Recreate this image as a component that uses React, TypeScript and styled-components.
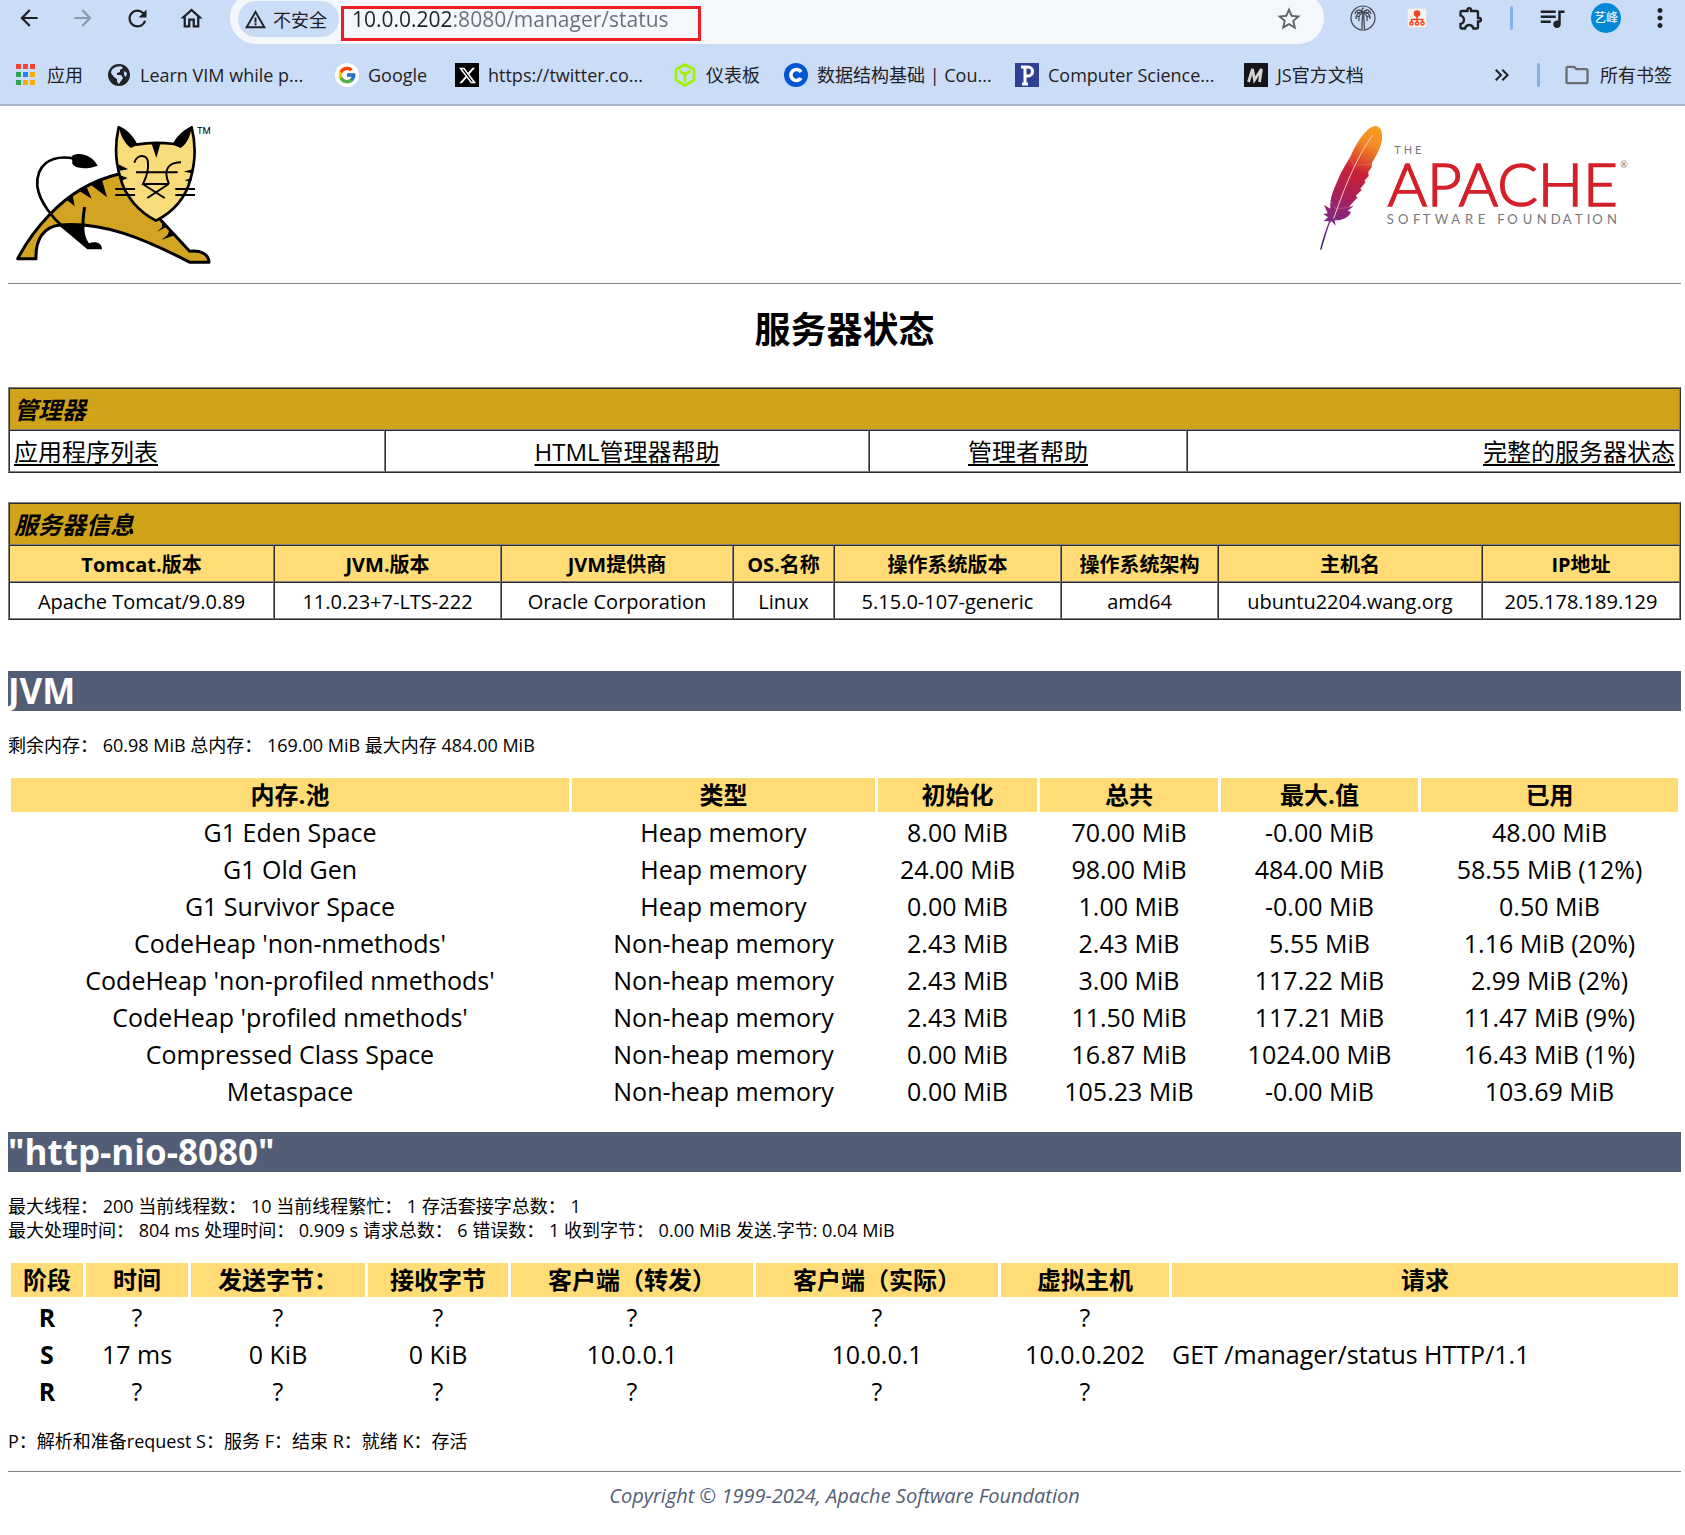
import React from 'react';
import styled, { createGlobalStyle } from 'styled-components';
import {
  MdArrowBack,
  MdArrowForward,
  MdRefresh,
  MdOutlineHome,
  MdStarOutline,
  MdOutlineExtension,
  MdQueueMusic,
  MdMoreVert,
  MdOutlineFolder,
  MdKeyboardDoubleArrowRight,
  MdWarningAmber,
} from 'react-icons/md';
import { FcGoogle } from 'react-icons/fc';
import { FaXTwitter } from 'react-icons/fa6';

const GlobalStyle = createGlobalStyle`
  *, *::before, *::after { box-sizing: border-box; }
  body {
    margin: 0;
    background: #fff;
    color: #000;
    font-family: "Open Sans", "Noto Sans CJK SC", sans-serif;
    overflow-x: hidden;
  }
  button { font: inherit; border: 0; padding: 0; background: none; color: inherit; }
`;

/* ---------- browser bar ---------- */

const BrowserBar = styled.header`
  background: #cbdcf6;
  border-bottom: 2px solid #a6b5cc;
  overflow: hidden;
`;

const Toolbar = styled.div`
  display: flex;
  height: 44px;
  margin-right: -2px;
  padding-left: 2px;
`;

const ToolGroup = styled.div`
  display: flex;
  flex: none;
  align-items: center;
  height: 36px;
`;

const ToolButton = styled.button<{ $muted?: boolean }>`
  display: flex;
  align-items: center;
  justify-content: center;
  width: 54px;
  height: 36px;
  color: ${(p) => (p.$muted ? '#8b97ab' : '#1f2125')};
`;

const Omnibox = styled.div`
  flex: 1;
  min-width: 0;
  display: flex;
  align-items: center;
  height: 52px;
  margin: -8px 12px 0;
  padding: 2px 21px 0 8px;
  border-radius: 26px;
  background: #f4f7fc;
`;

const SiteChip = styled.button`
  display: flex;
  align-items: center;
  gap: 6px;
  flex: none;
  width: 101px;
  height: 36px;
  margin-right: 2px;
  padding-left: 6px;
  border-radius: 18px;
  background: #cbdcf6;
  color: #1f2125;
  font-size: 18px;
  white-space: nowrap;
`;

const UrlFrame = styled.label`
  display: flex;
  width: 360px;
  height: 35px;
  margin-top: 8px;
  border: 3px solid #ee1c25;
`;

const UrlInput = styled.input`
  width: 100%;
  height: 28px;
  margin-top: -4px;
  padding: 0 8px;
  border: 0;
  outline: 0;
  font: 21px/28px "Open Sans", "Noto Sans CJK SC", sans-serif;
  color: #6a6e74;
  background: linear-gradient(90deg, #1f2125 107px, #6a6e74 107px);
  background-clip: text;
  -webkit-background-clip: text;
  -webkit-text-fill-color: transparent;
`;

const StarButton = styled.button`
  display: flex;
  margin-left: auto;
  color: #5f6266;
`;

const Divider = styled.span<{ $wide?: boolean }>`
  display: flex;
  justify-content: center;
  width: ${(p) => (p.$wide ? 27 : 3)}px;
  &::before {
    content: '';
    width: 3px;
    height: 24px;
    border-radius: 2px;
    background: #86afec;
  }
`;

const Avatar = styled.span`
  width: 30px;
  height: 30px;
  border-radius: 50%;
  background: #0488d8;
  color: #fff;
  font-size: 12px;
  line-height: 30px;
  text-align: center;
`;

const Bookmarks = styled.nav`
  display: flex;
  align-items: center;
  gap: 25px;
  height: 60px;
  padding: 2px 13px 0 14px;
`;

const Bookmark = styled.a`
  display: flex;
  align-items: center;
  gap: 9px;
  color: #1f2125;
  font-size: 18px;
  line-height: 28px;
  text-decoration: none;
  white-space: nowrap;
`;

const BookmarkLabel = styled.span<{ $width: number }>`
  width: ${(p) => p.$width}px;
`;

const BookmarkEnd = styled.div`
  display: flex;
  align-items: center;
  gap: 23px;
  margin-left: auto;
`;

const MoreButton = styled.button`
  display: flex;
  color: #1f2125;
`;

const Tile = styled.span<{ $bg: string; $size: number; $round?: boolean }>`
  display: flex;
  align-items: center;
  justify-content: center;
  width: ${(p) => p.$size}px;
  height: ${(p) => p.$size}px;
  border-radius: ${(p) => (p.$round ? '50%' : '0')};
  background: ${(p) => p.$bg};
  color: #fff;
`;

/* ---------- page ---------- */

const Page = styled.main`
  padding: 0 4px 22px 8px;
`;

const Logos = styled.div`
  display: flex;
  justify-content: space-between;
  align-items: flex-start;
  height: 177px;
  padding: 20px 53px 0 8px;
`;

const Rule = styled.hr`
  height: 1px;
  margin: 0;
  border: 0;
  background: #808080;
`;

const Title = styled.h1`
  margin: 22px 0 33px;
  font-size: 36px;
  line-height: 48px;
  text-align: center;
`;

const BorderedTable = styled.table`
  width: 100%;
  table-layout: fixed;
  border-collapse: separate;
  border-spacing: 0;
  border: 1px solid;
  border-color: #808080 #2d2d2d #2d2d2d #808080;
  & + & { margin-top: 29px; }
  th, td {
    border: 1px solid;
    border-color: #2d2d2d #808080 #808080 #2d2d2d;
  }
`;

const BandCell = styled.th`
  height: 42px;
  padding: 2px 4px 0;
  background: #d0a31b;
  font-size: 24px;
  line-height: 34px;
  font-style: italic;
  text-align: left;
`;

const LinkCell = styled.td<{ $align: string }>`
  height: 42px;
  padding: 2px 4px 0;
  font-size: 24px;
  line-height: 34px;
  text-align: ${(p) => p.$align};
  a { color: #000; text-underline-offset: 3px; text-decoration-thickness: 2px; }
`;

const InfoHead = styled.th`
  height: 37px;
  padding: 2px 0 0;
  background: #ffdc75;
  font-size: 20px;
  line-height: 30px;
`;

const InfoCell = styled.td`
  height: 37px;
  padding: 2px 0 0;
  font-size: 20px;
  line-height: 30px;
  text-align: center;
  white-space: nowrap;
`;

const Section = styled.h2<{ $first?: boolean }>`
  margin: ${(p) => (p.$first ? 51 : 21)}px 0 0;
  background: #525d76;
  color: #fff;
  font-size: 35px;
  line-height: 40px;
  height: 40px;
`;

const Note = styled.p<{ $legend?: boolean }>`
  margin: ${(p) => (p.$legend ? '18px 0' : '22px 0 18px')};
  font-size: 18px;
  line-height: 24px;
`;

const DataTable = styled.table`
  width: 100%;
  table-layout: fixed;
  border-collapse: separate;
  border-spacing: 3px;
  font-size: 25px;
  line-height: 34px;
  th, td {
    height: 34px;
    padding: 0;
    text-align: center;
    white-space: nowrap;
  }
  thead th { background: #ffdc75; font-size: 24px; }
  td.request { text-align: left; }
`;

const Footer = styled.footer`
  padding-top: 9px;
  color: #525d76;
  font-size: 20px;
  line-height: 30px;
  font-style: italic;
  text-align: center;
`;

/* ---------- drawings ---------- */

const AppsIcon = () => {
  const colors = ['#f04438', '#f04438', '#f04438', '#2fa452', '#2385f8', '#f8ae06', '#2fa452', '#f8ae06', '#f8ae06'];
  return (
    <svg width="24" height="24" viewBox="0 0 24 24" aria-hidden="true">
      {colors.map((c, i) => (
        <rect key={i} x={2 + (i % 3) * 7} y={1 + Math.floor(i / 3) * 8} width="5" height="5" fill={c} />
      ))}
    </svg>
  );
};

const GlobeIcon = () => (
  <svg width="24" height="24" viewBox="0 0 24 24" aria-hidden="true">
    <circle cx="12" cy="12" r="11" fill="#202327" />
    <path
      d="M9 4 C12 3 15 3 16 5 L13 7 L13 9 L10 10 L10 12 L14 12 L16 15 L14 18 L12 21 C10 20 10 18 10 16 L7 14 L4 10 C4 7 6 5 9 4Z M17 8 L20 10 L19 14 L17 12Z"
      fill="#cbdcf6"
    />
  </svg>
);

const CubeIcon = () => (
  <svg width="24" height="24" viewBox="0 0 24 24" aria-hidden="true">
    <path
      d="M12 1.5 L21 6.5 V17 L12 22.5 L3 17 V6.5Z M6.5 8 L12 11.2 L17.5 8 M12 11.2 V19"
      fill="none"
      stroke="#a2ef0c"
      strokeWidth="2.8"
      strokeLinejoin="round"
    />
  </svg>
);

const CourseraIcon = () => (
  <svg width="24" height="24" viewBox="0 0 24 24" aria-hidden="true">
    <path d="M17 9 A5.5 5.5 0 1 0 17 15" fill="none" stroke="#fff" strokeWidth="3.6" />
  </svg>
);

const PIcon = () => (
  <svg width="24" height="24" viewBox="0 0 24 24" aria-hidden="true">
    <path d="M10 21 V4 H13 C19 4 19 13 13 13 H10 M6 4 H10 M7 21 H13" fill="none" stroke="#fff" strokeWidth="3" />
  </svg>
);

const MIcon = () => (
  <svg width="24" height="24" viewBox="0 0 24 24" aria-hidden="true">
    <path d="M4.500 19 L8.500 6 L10.500 17 L17.500 6 L15.500 19" fill="none" stroke="#d4d4d4" strokeWidth="2.8" />
  </svg>
);

const PalmIcon = () => (
  <svg width="26" height="26" viewBox="0 0 26 26" fill="none" stroke="#41474f" aria-hidden="true">
    <circle cx="13" cy="13" r="12" strokeWidth="1.2" />
    <path
      strokeWidth="1.300"
      d="M12 24 C12 18 12 13 13 9 M14.500 24 C14 18 14 13 13.500 9 M13 8 C10 3 6 5 5 9 M13 8 C9 6 6 9 6 14 M13 8 C10 9 8 12 9 16 M13 8 C16 3 20 5 21 9 M13 8 C17 6 20 9 20 14 M13 8 C16 9 18 12 17 16 M13 8 C11 5 12 3 14 3 M7 7 L10 9 M19 7 L16 9 M7 11 L10 12 M19 11 L16 12"
    />
  </svg>
);

const TreeIcon = () => (
  <svg width="20" height="20" viewBox="0 0 20 20" aria-hidden="true">
    <rect x="0.500" y="0.500" width="19" height="19" rx="2" fill="#f6f3f3" stroke="#dfe0e4" />
    <g fill="none" stroke="#f0441a" strokeWidth="1.500">
      <circle cx="10" cy="5.500" r="2.500" fill="#f0441a" />
      <path d="M10 8 V14 M4.500 14 V11.500 H15.500 V14" />
      <circle cx="4.500" cy="15.500" r="1.600" />
      <circle cx="10" cy="15.500" r="1.600" />
      <circle cx="15.500" cy="15.500" r="1.600" />
    </g>
  </svg>
);

const TomcatLogo = () => (
  <svg width="195" height="139" viewBox="48 48 585 417" role="img" aria-label="Tomcat">
    <path
      d="M53 446 L108 446 C106 390 130 350 180 345 C310 335 430 385 570 457 L627 457 C626 432 602 420 569 424 L480 328 L400 200 L357 192 C270 213 200 260 150 313 C112 352 80 395 53 446Z"
      fill="#d2a421"
      stroke="#000"
      strokeWidth="9"
      strokeLinejoin="round"
    />
    <path d="M225 146 C145 130 108 172 112 228 C117 275 160 325 190 352" fill="none" stroke="#000" strokeWidth="8" />
    <path d="M216 138 C236 126 272 132 293 167 C262 179 222 177 217 160Z" />
    <path d="M178 347 L262 418 L306 418 C306 398 286 392 267 400 C256 385 253 368 253 349 L220 342Z" />
    <path d="M254 291 C250 315 247 330 250 352" fill="none" stroke="#000" strokeWidth="9" />
    <path d="M272 224 L306 210 L321 262Z M238 243 L260 232 L275 266Z M198 268 L218 256 L224 289Z" />
    <path d="M486 334 L500 350 L471 365 L486 352Z M508 362 L524 376 L485 389 L502 376Z" />
    <path
      d="M356 52 C345 100 345 150 360 200 C375 262 420 307 468 332 C520 305 558 262 572 205 C588 150 587 100 575 52 C555 62 535 80 523 102 C485 97 445 97 408 104 C395 80 375 60 356 52Z"
      fill="#f8dc7b"
      stroke="#000"
      strokeWidth="8"
      strokeLinejoin="round"
    />
    <path d="M358 54 C377 60 405 80 411 105 L393 114 C378 103 362 82 358 54Z M574 54 C554 60 525 80 519 104 L542 114 C558 102 570 85 574 54Z M454 98 L482 98 L469 144Z" />
    <path d="M355 163 L385 178 L359 182Z M358 195 L383 204 L362 214Z M579 177 L551 185 L577 190Z M577 203 L554 211 L572 217Z" />
    <g fill="none" stroke="#000" strokeWidth="6">
      <path d="M403 158 C410 132 444 130 444 160 C446 190 436 205 429 222 H505 M543 157 C512 157 499 172 499 192 C500 208 504 215 507 222" />
      <path d="M408 187 H533 M428 222 L494 264 M506 222 L442 264" />
      <path d="M346 237 H405 M346 255 H405 M526 237 H585 M526 255 H585" />
    </g>
    <text x="591" y="72" fontSize="28" fontFamily="Roboto, sans-serif">TM</text>
  </svg>
);

const ApacheLogo = () => (
  <svg width="308" height="125" viewBox="63 48 924 375" role="img" aria-label="The Apache Software Foundation">
    <defs>
      <linearGradient id="feather" gradientUnits="userSpaceOnUse" x1="230" y1="50" x2="70" y2="420">
        <stop offset="0" stopColor="#f99d1f" />
        <stop offset="0.14" stopColor="#f28a24" />
        <stop offset="0.28" stopColor="#dd4a2c" />
        <stop offset="0.36" stopColor="#cb2138" />
        <stop offset="0.54" stopColor="#ad2050" />
        <stop offset="0.66" stopColor="#962270" />
        <stop offset="0.8" stopColor="#752a80" />
        <stop offset="1" stopColor="#20245c" />
      </linearGradient>
    </defs>
    <path
      d="M228 48 C244 49 251 62 249 86 C246 112 234 134 219 158 L218 172 L208 186 L209 198 L196 212 L200 216 L184 236 L188 240 L170 258 L176 262 L150 290 L164 289 L146 302 L156 306 C148 326 124 332 107 331 L110 347 L98 334 L92 340 C82 368 76 392 67 419 L63 419 C70 390 80 362 90 334 L74 333 L87 322 L73 312 L86 310 L75 285 L94 296 C92 260 104 240 118 206 C130 178 142 160 154 140 C174 96 202 52 228 48Z"
      fill="url(#feather)"
    />
    <path d="M221 76 C180 130 140 220 104 326" fill="none" stroke="#f6cfc8" strokeWidth="3" />
    <path
      d="M196 76 L208 98 L247 93 M152 143 L166 166 L218 162 M95 273 L110 297 L150 292"
      fill="none"
      stroke="#ee9d80"
      strokeOpacity="0.7"
      strokeWidth="1.500"
    />
    <text x="266" y="287" fontSize="180" fontWeight="300" fontFamily="Lato, sans-serif" fill="#d42028" stroke="#d42028" strokeWidth="5">
      APACHE
    </text>
    <g fill="#77787b" fontFamily="Lato, sans-serif">
      <text x="286 314 348" y="132" fontSize="33">THE</text>
      <text
        x="263 297 342 371 407 457 498 536 570 595 625 671 713 755 791 828 863 880 924"
        y="341"
        fontSize="39"
      >
        SOFTWARE FOUNDATION
      </text>
      <text x="963" y="174" fontSize="28">®</text>
    </g>
  </svg>
);

/* ---------- data ---------- */

const infoColumns = [
  { width: 265, head: 'Tomcat.版本', value: 'Apache Tomcat/9.0.89' },
  { width: 227, head: 'JVM.版本', value: '11.0.23+7-LTS-222' },
  { width: 232, head: 'JVM提供商', value: 'Oracle Corporation' },
  { width: 101, head: 'OS.名称', value: 'Linux' },
  { width: 227, head: '操作系统版本', value: '5.15.0-107-generic' },
  { width: 157, head: '操作系统架构', value: 'amd64' },
  { width: 264, head: '主机名', value: 'ubuntu2204.wang.org' },
  { width: 198, head: 'IP地址', value: '205.178.189.129' },
];

const managerLinks = [
  { width: 376, align: 'left', text: '应用程序列表' },
  { width: 484, align: 'center', text: 'HTML管理器帮助' },
  { width: 318, align: 'center', text: '管理者帮助' },
  { width: 493, align: 'right', text: '完整的服务器状态' },
];

const memoryHead = ['内存.池', '类型', '初始化', '总共', '最大.值', '已用'];
const memoryWidths = [558, 303, 159, 178, 197, 257];
const memoryRows = [
  ['G1 Eden Space', 'Heap memory', '8.00 MiB', '70.00 MiB', '-0.00 MiB', '48.00 MiB'],
  ['G1 Old Gen', 'Heap memory', '24.00 MiB', '98.00 MiB', '484.00 MiB', '58.55 MiB (12%)'],
  ['G1 Survivor Space', 'Heap memory', '0.00 MiB', '1.00 MiB', '-0.00 MiB', '0.50 MiB'],
  ["CodeHeap 'non-nmethods'", 'Non-heap memory', '2.43 MiB', '2.43 MiB', '5.55 MiB', '1.16 MiB (20%)'],
  ["CodeHeap 'non-profiled nmethods'", 'Non-heap memory', '2.43 MiB', '3.00 MiB', '117.22 MiB', '2.99 MiB (2%)'],
  ["CodeHeap 'profiled nmethods'", 'Non-heap memory', '2.43 MiB', '11.50 MiB', '117.21 MiB', '11.47 MiB (9%)'],
  ['Compressed Class Space', 'Non-heap memory', '0.00 MiB', '16.87 MiB', '1024.00 MiB', '16.43 MiB (1%)'],
  ['Metaspace', 'Non-heap memory', '0.00 MiB', '105.23 MiB', '-0.00 MiB', '103.69 MiB'],
];

const workerHead = ['阶段', '时间', '发送字节：', '接收字节', '客户端（转发）', '客户端（实际）', '虚拟主机', '请求'];
const workerWidths = [72, 102, 174, 140, 242, 242, 168, 506];
const workerRows = [
  ['R', '?', '?', '?', '?', '?', '?', ''],
  ['S', '17 ms', '0 KiB', '0 KiB', '10.0.0.1', '10.0.0.1', '10.0.0.202', 'GET /manager/status HTTP/1.1'],
  ['R', '?', '?', '?', '?', '?', '?', ''],
];

const bookmarks = [
  { label: '应用', width: 35, icon: <AppsIcon /> },
  { label: 'Learn VIM while p...', width: 170, icon: <GlobeIcon /> },
  {
    label: 'Google',
    width: 62,
    icon: (
      <Tile $bg="#fff" $size={24} $round>
        <FcGoogle size={20} />
      </Tile>
    ),
  },
  {
    label: 'https://twitter.co...',
    width: 160,
    icon: (
      <Tile $bg="#000" $size={24}>
        <FaXTwitter size={19} />
      </Tile>
    ),
  },
  { label: '仪表板', width: 53, icon: <CubeIcon /> },
  {
    label: '数据结构基础 | Cou...',
    width: 173,
    icon: (
      <Tile $bg="#0056d2" $size={24} $round>
        <CourseraIcon />
      </Tile>
    ),
  },
  {
    label: 'Computer Science...',
    width: 171,
    icon: (
      <Tile $bg="#2f3f94" $size={24}>
        <PIcon />
      </Tile>
    ),
  },
  {
    label: 'JS官方文档',
    width: 90,
    icon: (
      <Tile $bg="#15141a" $size={24}>
        <MIcon />
      </Tile>
    ),
  },
];

const Columns = ({ widths }: { widths: number[] }) => (
  <colgroup>
    {widths.map((w, i) => (
      <col key={i} width={w} />
    ))}
  </colgroup>
);

const Browser = () => (
  <BrowserBar>
    <Toolbar>
      <ToolGroup>
        <ToolButton aria-label="后退"><MdArrowBack size={26} /></ToolButton>
        <ToolButton aria-label="前进" $muted><MdArrowForward size={26} /></ToolButton>
        <ToolButton aria-label="重新加载"><MdRefresh size={27} /></ToolButton>
        <ToolButton aria-label="主页"><MdOutlineHome size={27} /></ToolButton>
      </ToolGroup>
      <Omnibox>
        <SiteChip>
          <MdWarningAmber size={23} />
          不安全
        </SiteChip>
        <UrlFrame>
          <UrlInput aria-label="地址" defaultValue="10.0.0.202:8080/manager/status" />
        </UrlFrame>
        <StarButton aria-label="收藏"><MdStarOutline size={28} /></StarButton>
      </Omnibox>
      <ToolGroup>
        <ToolButton aria-label="扩展一"><PalmIcon /></ToolButton>
        <ToolButton aria-label="扩展二"><TreeIcon /></ToolButton>
        <ToolButton aria-label="扩展程序"><MdOutlineExtension size={28} /></ToolButton>
        <Divider $wide />
        <ToolButton aria-label="媒体"><MdQueueMusic size={30} /></ToolButton>
        <ToolButton><Avatar>艺峰</Avatar></ToolButton>
        <ToolButton aria-label="菜单"><MdMoreVert size={30} /></ToolButton>
      </ToolGroup>
    </Toolbar>
    <Bookmarks>
      {bookmarks.map((b) => (
        <Bookmark key={b.label} href="#">
          {b.icon}
          <BookmarkLabel $width={b.width}>{b.label}</BookmarkLabel>
        </Bookmark>
      ))}
      <BookmarkEnd>
        <MoreButton aria-label="更多书签"><MdKeyboardDoubleArrowRight size={24} /></MoreButton>
        <Divider />
        <Bookmark href="#">
          <MdOutlineFolder size={28} color="#6a6d72" />
          所有书签
        </Bookmark>
      </BookmarkEnd>
    </Bookmarks>
  </BrowserBar>
);

export default function App() {
  return (
    <>
      <GlobalStyle />
      <Browser />
      <Page lang="zh-CN">
        <Logos>
          <TomcatLogo />
          <ApacheLogo />
        </Logos>
        <Rule />
        <Title>服务器状态</Title>

        <BorderedTable>
          <Columns widths={managerLinks.map((l) => l.width)} />
          <tbody>
            <tr><BandCell colSpan={4}>管理器</BandCell></tr>
            <tr>
              {managerLinks.map((l) => (
                <LinkCell key={l.text} $align={l.align}><a href="#">{l.text}</a></LinkCell>
              ))}
            </tr>
          </tbody>
        </BorderedTable>

        <BorderedTable>
          <Columns widths={infoColumns.map((c) => c.width)} />
          <tbody>
            <tr><BandCell colSpan={8}>服务器信息</BandCell></tr>
            <tr>{infoColumns.map((c) => <InfoHead key={c.head}>{c.head}</InfoHead>)}</tr>
            <tr>{infoColumns.map((c) => <InfoCell key={c.head}>{c.value}</InfoCell>)}</tr>
          </tbody>
        </BorderedTable>

        <Section $first>JVM</Section>
        <Note>剩余内存： 60.98 MiB 总内存： 169.00 MiB 最大内存 484.00 MiB</Note>
        <DataTable>
          <Columns widths={memoryWidths} />
          <thead>
            <tr>{memoryHead.map((h) => <th key={h}>{h}</th>)}</tr>
          </thead>
          <tbody>
            {memoryRows.map((row) => (
              <tr key={row[0]}>{row.map((v, i) => <td key={i}>{v}</td>)}</tr>
            ))}
          </tbody>
        </DataTable>

        <Section>"http-nio-8080"</Section>
        <Note>
          最大线程： 200 当前线程数： 10 当前线程繁忙： 1 存活套接字总数： 1<br />
          最大处理时间： 804 ms 处理时间： 0.909 s 请求总数： 6 错误数： 1 收到字节： 0.00 MiB 发送.字节: 0.04 MiB
        </Note>
        <DataTable>
          <Columns widths={workerWidths} />
          <thead>
            <tr>{workerHead.map((h) => <th key={h}>{h}</th>)}</tr>
          </thead>
          <tbody>
            {workerRows.map((row, r) => (
              <tr key={r}>
                <th scope="row">{row[0]}</th>
                {row.slice(1).map((v, i) => (
                  <td key={i} className={i === 6 ? 'request' : undefined}>{v}</td>
                ))}
              </tr>
            ))}
          </tbody>
        </DataTable>
        <Note $legend>P：解析和准备request S：服务 F：结束 R：就绪 K：存活</Note>
        <Rule />
        <Footer>Copyright © 1999-2024, Apache Software Foundation</Footer>
      </Page>
    </>
  );
}
